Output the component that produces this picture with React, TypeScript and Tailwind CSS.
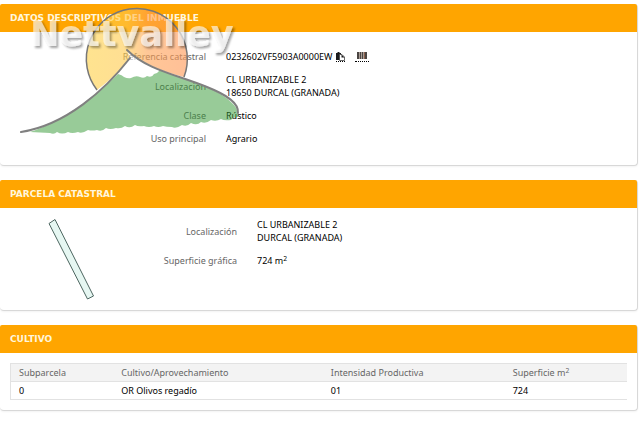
import type { ReactNode } from "react";

// ─── Types ────────────────────────────────────────────────────────────────────

interface Crop {
  plot: string;
  use: string;
  intensity: string;
  area: string;
}

const crops: Crop[] = [
  { plot: "0", use: "OR Olivos regadío", intensity: "01", area: "724" },
];

// ─── Panel ────────────────────────────────────────────────────────────────────

function Panel({ title, children }: { title: string; children: ReactNode }) {
  return (
    <section className="rounded-sm border-r border-b border-[#d8d8d8] bg-white shadow-xs">
      <h2 className="rounded-t-xs bg-[#ffa500] px-2.5 py-2 font-['DejaVu_Sans',sans-serif] text-[9px] leading-3 font-bold text-[#fff6dc] uppercase">
        {title}
      </h2>
      {children}
    </section>
  );
}

function Field({ label, children }: { label: string; children: ReactNode }) {
  return (
    <>
      <dt className="self-center text-right text-[#666]">{label}</dt>
      <dd className="text-black">{children}</dd>
    </>
  );
}

// ─── Small icons ──────────────────────────────────────────────────────────────

function CopyIcon() {
  return (
    <svg viewBox="0 0 9 9" className="h-[9px] w-[9px]" aria-hidden="true">
      <path d="M0 1h1.500V0h2v1H5v7H0z" fill="#1c1c1c" />
      <path d="M3.500 2.500h2.500l2.500 2.500v3.500h-5z" fill="#fff" stroke="#444" strokeWidth="0.8" />
      <path d="M5.500 2.500v3h3z" fill="#1c1c1c" />
    </svg>
  );
}

function BarcodeIcon() {
  return (
    <svg viewBox="0 0 10 7" className="h-[7px] w-2.5" aria-hidden="true">
      <path d="M0 0h10v7H0z" fill="#a89c94" />
      <path d="M0 0h2v7H0zM3 0h1v7H3zM5 0h1v7H5zM8 0h2v7H8z" fill="#4a4542" />
      <path d="M7 0h1v7H7z" fill="#8a5f4c" />
    </svg>
  );
}

// ─── Watermark: sun behind a green hill, with the agency name across it ───────

function Watermark() {
  return (
    <svg
      viewBox="0 0 250 140"
      className="pointer-events-none absolute top-0 left-0 h-[140px] w-[250px]"
      role="img"
      aria-label="Nettvalley"
    >
      <defs>
        <linearGradient id="sun" x1="0" x2="1">
          <stop offset="0" stopColor="#ffc820" />
          <stop offset="0.4" stopColor="#ffbe28" />
          <stop offset="0.6" stopColor="#ff9030" />
          <stop offset="1" stopColor="#ff8030" />
        </linearGradient>
        <filter id="soft" x="-10%" y="-20%" width="120%" height="150%">
          <feDropShadow dx="2" dy="2" stdDeviation="1.3" floodColor="#000" floodOpacity="0.6" />
        </filter>
      </defs>
      <path d="M97 90A50.500 50.500 0 1 1 184 77Q147 68 127 50L130 58Q116 76 97 90z" fill="#fff" fillOpacity="0.2" />
      <path d="M97 90A50.500 50.500 0 1 1 184 77Q147 68 127 50L130 58Q116 76 97 90z" fill="url(#sun)" fillOpacity="0.5" />
      <path d="M97 90A50.500 50.500 0 1 1 184 77" fill="none" stroke="#777" strokeWidth="1.5" />
      <path d="M130 56L119 75L128 78L148 77L160 70Q142 64 130 54Z" fill="#fff" fillOpacity="0.6" />
      <path
        d="M30 132C62 122 94 97 118 74q4 1 6 3q4 2 7 1q5-3 9-1q4 2 7-1q5 2 7-2q4-1 6-4C190 82 219 88 234 105q5 6 4 12q-5 0-7 3q-7 1-10-1q-5 3-10 1q-5 4-10 2q-4 4-10 1q-4 4-9 2q-6 4-10 2q-6 0-9-1q-5 2-9 0q-5 2-10 0q-6 1-9-1q-5 4-10 1q-4 3-9 2q-6 2-10 0q-4 4-9 2q-5 1-9 0q-6 4-10 2q-6 2-10 0q-6 3-11 0q-3 3-7 1z"
        fill="#319731"
        fillOpacity="0.5"
      />
      <path
        d="M21 132C66 125 105 90 130 58"
        fill="none"
        stroke="#808080"
        strokeWidth="2"
        strokeLinecap="round"
      />
      <path
        d="M127 50C147 70 178 75 207 87C227 95 239 103 238 113"
        fill="none"
        stroke="#808080"
        strokeWidth="2"
        strokeLinecap="round"
      />
      <text
        x="30"
        y="46"
        fill="#fff"
        fillOpacity="0.6"
        filter="url(#soft)"
        className="font-['DejaVu_Sans',sans-serif] text-[35px] font-bold"
      >
        Nettvalley
      </text>
    </svg>
  );
}

// ─── Page ─────────────────────────────────────────────────────────────────────

export default function App() {
  return (
    <main className="relative flex min-h-screen flex-col gap-3.5 bg-white pt-1 pr-0.5 font-['Noto_Sans',sans-serif] text-[9px] leading-[13px]">
      <Panel title="Datos descriptivos del inmueble">
        <dl className="grid grid-cols-[206px_1fr] gap-x-5 gap-y-2.5 pt-[18px] pb-5">
          <Field label="Referencia catastral">
            <span className="flex h-[13px] items-center gap-1">
              0232602VF5903A0000EW
              <button type="button" aria-label="Copiar" className="border-b border-dotted border-black">
                <CopyIcon />
              </button>
              <button
                type="button"
                aria-label="Código de barras"
                className="ml-1.5 border-b border-dotted border-black px-0.5 pb-0.5"
              >
                <BarcodeIcon />
              </button>
            </span>
          </Field>
          <Field label="Localización">
            CL URBANIZABLE 2<br />
            18650 DURCAL (GRANADA)
          </Field>
          <Field label="Clase">Rústico</Field>
          <Field label="Uso principal">Agrario</Field>
        </dl>
      </Panel>

      <Panel title="Parcela catastral">
        <div className="flex pt-2.5 pb-2.5">
          <svg viewBox="0 0 50 82" className="ml-[47px] h-[82px] w-[50px]" aria-hidden="true">
            <path d="M2 5.500L8 1.500L46.500 78L40.500 81Z" fill="#e6f7f2" stroke="#4d6660" />
          </svg>
          <dl className="grid flex-1 grid-cols-[140px_1fr] content-start gap-x-5 gap-y-2.5">
            <Field label="Localización">
              CL URBANIZABLE 2<br />
              DURCAL (GRANADA)
            </Field>
            <Field label="Superficie gráfica">
              724 m<sup>2</sup>
            </Field>
          </dl>
        </div>
      </Panel>

      <Panel title="Cultivo">
        <div className="px-2.5 py-2.5">
          <table className="w-full table-fixed border border-r-0 border-[#e2e2e2] text-left">
            <thead className="bg-[#f3f3f3] text-[#666]">
              <tr className="border-b border-[#e2e2e2]">
                <th className="w-1/6 px-2 py-0.5 font-normal">Subparcela</th>
                <th className="w-[34%] px-2 py-0.5 font-normal">Cultivo/Aprovechamiento</th>
                <th className="w-[29.5%] px-2 py-0.5 font-normal">Intensidad Productiva</th>
                <th className="px-2 py-0.5 font-normal">
                  Superficie m<sup>2</sup>
                </th>
              </tr>
            </thead>
            <tbody>
              {crops.map((crop) => (
                <tr key={crop.plot}>
                  <td className="px-2 py-0.5">{crop.plot}</td>
                  <td className="px-2 py-0.5">{crop.use}</td>
                  <td className="px-2 py-0.5">{crop.intensity}</td>
                  <td className="px-2 py-0.5">{crop.area}</td>
                </tr>
              ))}
            </tbody>
          </table>
        </div>
      </Panel>

      <Watermark />
    </main>
  );
}
